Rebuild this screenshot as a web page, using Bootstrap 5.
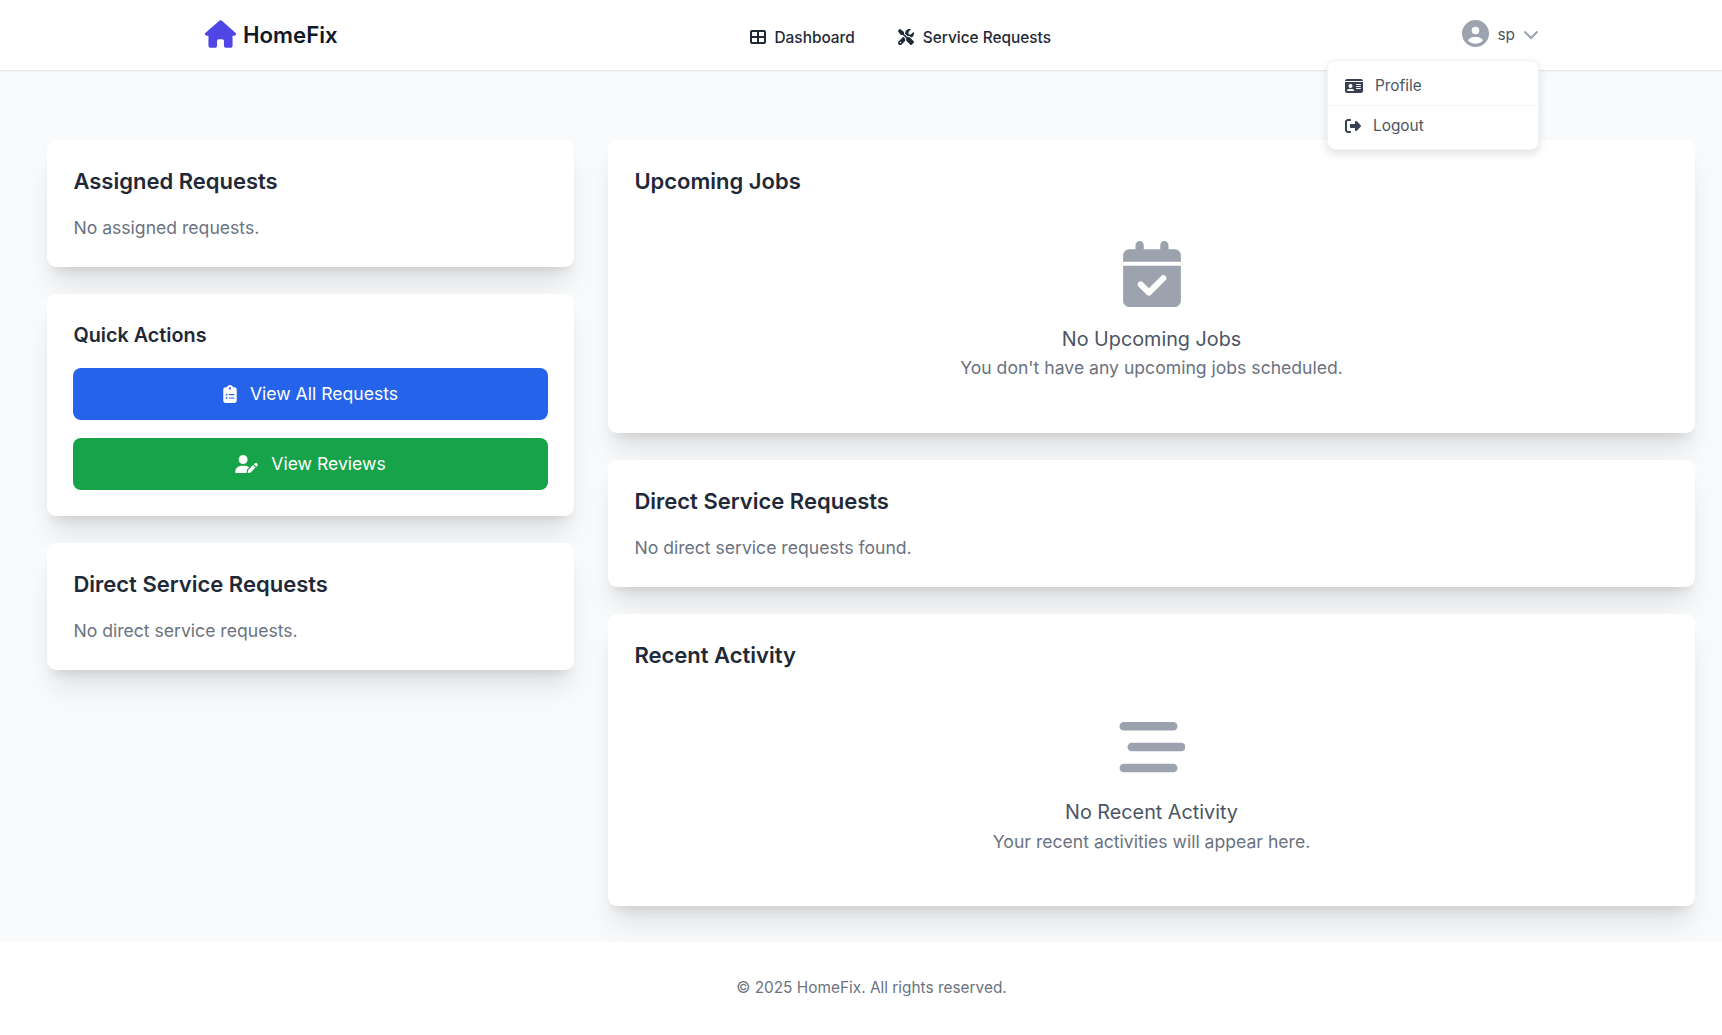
<!DOCTYPE html>
<html lang="en">

<head>
    <meta charset="UTF-8">
    <meta name="viewport" content="width=device-width, initial-scale=1.0">
    <title>HomeFix</title>
    <link href="https://cdn.jsdelivr.net/npm/bootstrap@5.3.0/dist/css/bootstrap.min.css" rel="stylesheet">
    <style>
        body {
            background: #fff;
            color: #1f2937;
            font-family: Inter, "Liberation Sans", sans-serif;
            font-size: 17.6px;
            min-height: 1035px;
        }

        .top-bar {
            height: 71px;
            background: #fff;
            border-bottom: 1px solid #e5e7eb;
            box-shadow: 0 1px 2px rgba(0, 0, 0, .04);
            padding: 0 183px 0 205px;
            position: relative;
        }

        .brand-link {
            color: #111827;
            font-size: 22.2px;
            font-weight: 600;
            text-decoration: none;
            gap: 7px;
        }

        .brand-link svg {
            width: 31px;
            height: 28px;
            fill: #4f46e5;
            margin-top: -1px;
        }

        .top-links {
            position: absolute;
            left: 750px;
            top: 26px;
            gap: 43.5px;
        }

        .top-links a {
            color: #1f2937;
            font-size: 15.4px;
            font-weight: 500;
            text-decoration: none;
            gap: 8.5px;
            line-height: 24px;
        }

        .top-links svg {
            width: 16px;
            height: 16px;
            fill: #1f2937;
            margin-top: -3px;
        }

        .user-toggle {
            color: #4b5563;
            font-size: 15.4px;
            gap: 8px;
            margin-top: -3px;
        }

        .user-toggle .avatar-icon {
            width: 27px;
            height: 27px;
            fill: #9ca3af;
        }

        .user-toggle span {
            margin-top: 2px;
        }

        .user-toggle .chev-icon {
            width: 16px;
            height: 10px;
            fill: none;
            stroke: #9ca3af;
            stroke-width: 2;
            margin-top: 2px;
        }

        .user-menu.dropdown-menu {
            position: absolute;
            display: block;
            left: 1327px;
            top: 60px;
            width: 212px;
            height: 90px;
            padding: 0;
            border: 1px solid #f3f4f6;
            border-radius: 8px;
            box-shadow: 0 4px 10px rgba(0, 0, 0, .12);
            font-size: 15.4px;
            z-index: 5;
        }

        .user-menu .dropdown-item {
            color: #4b5563;
            display: flex;
            align-items: center;
            height: 44px;
            padding: 5px 17px 0;
        }

        .user-menu .dropdown-item + .dropdown-item {
            border-top: 1px solid #f3f4f6;
            height: 45px;
            padding: 0 17px 4px;
        }

        .user-menu svg {
            fill: #374151;
            margin-right: 12px;
        }

        .page-main {
            background: #f9fafb;
            padding: 69px 27px 35px 47px;
            height: 871px;
        }

        .dash-grid {
            display: grid;
            grid-template-columns: 527px 1087px;
            column-gap: 34px;
            align-items: start;
        }

        .dash-col {
            display: flex;
            flex-direction: column;
            gap: 26.8px;
        }

        .dash-card.card {
            border: 0;
            border-radius: 9px;
            padding: 26.4px 26.4px 26px;
            box-shadow: 0 22px 27.5px -5.5px rgba(0, 0, 0, .1), 0 8.8px 11px -6.6px rgba(0, 0, 0, .1);
        }

        .dash-title {
            color: #1f2937;
            font-size: 22px;
            font-weight: 600;
            line-height: 30.8px;
            margin: 0 0 17.6px;
        }

        .dash-title.sm-title {
            font-size: 19.8px;
            margin-bottom: 16.4px;
        }

        .muted-text {
            color: #6b7280;
            font-size: 17.6px;
            line-height: 26.4px;
            margin: 0;
        }

        .action-btn.btn {
            color: #fff;
            font-size: 17.6px;
            font-weight: 400;
            border: 0;
            border-radius: 8px;
            height: 52.4px;
            gap: 13px;
        }

        .action-btn svg {
            fill: #fff;
        }

        .btn-blue.btn {
            background: #2563eb;
            margin-bottom: 17.6px;
        }

        .btn-green.btn {
            background: #16a34a;
        }

        .empty-box {
            text-align: center;
            padding: 26.4px 0 25.4px;
        }

        .empty-box svg {
            fill: #9ca3af;
            display: block;
            margin: 0 auto 16.5px;
        }

        .empty-head {
            color: #4b5563;
            font-size: 19.8px;
            line-height: 31.8px;
            margin: 0;
        }

        .page-foot {
            height: 93px;
            background: #fff;
            padding: 0 0 2px 21px;
            color: #6b7280;
            font-size: 15.4px;
            position: relative;
        }
    </style>
</head>

<body>
    <nav class="top-bar d-flex align-items-center justify-content-between">
        <a class="brand-link d-flex align-items-center" href="#">
            <svg viewBox="0 0 576 512"><path d="M575.8 255.5c0 18-15 32.1-32 32.1h-32l.7 160.2c0 2.7-.2 5.4-.5 8.1V472c0 22.1-17.9 40-40 40H456c-1.1 0-2.2 0-3.3-.1c-1.4 .1-2.8 .1-4.2 .1H416 392c-22.1 0-40-17.9-40-40V448 384c0-17.7-14.3-32-32-32H256c-17.7 0-32 14.3-32 32v64 24c0 22.1-17.9 40-40 40H160 128.1c-1.5 0-3-.1-4.5-.2c-1.2 .1-2.4 .2-3.6 .2H104c-22.1 0-40-17.9-40-40V360c0-.9 0-1.9 .1-2.8V287.6H32c-18 0-32-14-32-32.1c0-9 3-17 10-24L266.4 8c7-7 15-8 22-8s15 2 21 7L564.8 231.5c8 7 12 15 11 24z"/></svg>
            HomeFix
        </a>
        <div class="top-links d-flex">
            <a class="d-flex align-items-center" href="#">
                <svg viewBox="0 0 512 512"><path d="M448 96V224H288V96H448zm0 192V416H288V288H448zM224 224H64V96H224V224zM64 288H224V416H64V288zM64 32C28.7 32 0 60.7 0 96V416c0 35.3 28.7 64 64 64H448c35.3 0 64-28.7 64-64V96c0-35.3-28.7-64-64-64H64z"/></svg>
                Dashboard
            </a>
            <a class="d-flex align-items-center" href="#">
                <svg viewBox="0 0 512 512"><path d="M78.6 5C69.1-2.4 55.6-1.5 47 7L7 47c-8.5 8.5-9.4 22-2.1 31.6l80 104c4.5 5.9 11.6 9.4 19 9.4h54.1l109 109c-14.7 29-10 65.4 14.3 89.6l112 112c12.5 12.5 32.8 12.5 45.3 0l64-64c12.5-12.5 12.5-32.8 0-45.3l-112-112c-24.2-24.2-60.6-29-89.6-14.3l-109-109V104c0-7.5-3.5-14.5-9.4-19L78.6 5zM19.9 396.1C7.2 408.8 0 426.1 0 444.1C0 481.6 30.4 512 67.9 512c18 0 35.3-7.2 48-19.9L233.7 374.3c-7.8-20.9-9-43.6-3.6-65.1l-61.7-61.7L19.9 396.1zM512 144c0-10.5-1.1-20.7-3.2-30.5c-2.4-11.2-16.1-14.1-24.2-6l-63.9 63.9c-3 3-7.1 4.7-11.3 4.7H352c-8.8 0-16-7.2-16-16V102.6c0-4.2 1.7-8.3 4.7-11.3l63.9-63.9c8.1-8.1 5.2-21.8-6-24.2C388.7 1.1 378.5 0 368 0C288.5 0 224 64.5 224 144l0 .8 85.3 85.3c36-9.1 75.8 .5 104 28.7L429 274.5c49-23 83-72.8 83-130.5zM56 432a24 24 0 1 1 48 0 24 24 0 1 1 -48 0z"/></svg>
                Service Requests
            </a>
        </div>
        <div class="user-toggle d-flex align-items-center">
            <svg class="avatar-icon" viewBox="0 0 512 512"><path d="M399 384.2C376.9 345.8 335.4 320 288 320H224c-47.4 0-88.9 25.8-111 64.2c35.2 39.2 86.2 63.8 143 63.8s107.8-24.7 143-63.8zM0 256a256 256 0 1 1 512 0A256 256 0 1 1 0 256zm256 16a72 72 0 1 0 0-144 72 72 0 1 0 0 144z"/></svg>
            <span>sp</span>
            <svg class="chev-icon" viewBox="0 0 16 10"><path d="M1.5 1.5 8 8l6.5-6.5"/></svg>
        </div>
        <div class="user-menu dropdown-menu">
            <a class="dropdown-item" href="#">
                <svg width="18" height="16" viewBox="0 0 576 512"><path d="M0 96l576 0c0-35.3-28.7-64-64-64H64C28.7 32 0 60.7 0 96zm0 32V416c0 35.3 28.7 64 64 64H512c35.3 0 64-28.7 64-64V128H0zM64 405.3c0-29.5 23.9-53.3 53.3-53.3H234.7c29.5 0 53.3 23.9 53.3 53.3c0 5.9-4.8 10.7-10.7 10.7H74.7c-5.9 0-10.7-4.8-10.7-10.7zM176 192a64 64 0 1 1 0 128 64 64 0 1 1 0-128zm176 16c0-8.8 7.2-16 16-16H496c8.8 0 16 7.2 16 16s-7.2 16-16 16H368c-8.8 0-16-7.2-16-16zm0 64c0-8.8 7.2-16 16-16H496c8.8 0 16 7.2 16 16s-7.2 16-16 16H368c-8.8 0-16-7.2-16-16zm0 64c0-8.8 7.2-16 16-16H496c8.8 0 16 7.2 16 16s-7.2 16-16 16H368c-8.8 0-16-7.2-16-16z"/></svg>
                Profile
            </a>
            <a class="dropdown-item" href="#">
                <svg width="16" height="16" viewBox="0 0 512 512"><path d="M377.9 105.9L500.7 228.7c7.2 7.2 11.3 17.1 11.3 27.3s-4.1 20.1-11.3 27.3L377.9 406.1c-6.4 6.4-15 9.9-24 9.9c-18.7 0-33.9-15.2-33.9-33.9l0-62.1-128 0c-17.7 0-32-14.3-32-32l0-64c0-17.7 14.3-32 32-32l128 0 0-62.1c0-18.7 15.2-33.9 33.9-33.9c9 0 17.6 3.6 24 9.9zM160 96L96 96c-17.7 0-32 14.3-32 32l0 256c0 17.7 14.3 32 32 32l64 0c17.7 0 32 14.3 32 32s-14.3 32-32 32l-64 0c-53 0-96-43-96-96L0 128C0 75 43 32 96 32l64 0c17.7 0 32 14.3 32 32s-14.3 32-32 32z"/></svg>
                Logout
            </a>
        </div>
    </nav>

    <main class="page-main">
        <div class="dash-grid">
            <div class="dash-col">
                <div class="card dash-card">
                    <h2 class="dash-title">Assigned Requests</h2>
                    <p class="muted-text">No assigned requests.</p>
                </div>
                <div class="card dash-card">
                    <h3 class="dash-title sm-title">Quick Actions</h3>
                    <a class="btn action-btn btn-blue d-flex align-items-center justify-content-center" href="#">
                        <svg width="14" height="18" viewBox="0 0 384 512"><path d="M192 0c-41.8 0-77.4 26.7-90.5 64H64C28.7 64 0 92.7 0 128V448c0 35.3 28.7 64 64 64H320c35.3 0 64-28.7 64-64V128c0-35.3-28.7-64-64-64H282.5C269.4 26.7 233.8 0 192 0zm0 64a32 32 0 1 1 0 64 32 32 0 1 1 0-64zM72 272a24 24 0 1 1 48 0 24 24 0 1 1 -48 0zm104-16H304c8.8 0 16 7.2 16 16s-7.2 16-16 16H176c-8.8 0-16-7.2-16-16s7.2-16 16-16zM72 368a24 24 0 1 1 48 0 24 24 0 1 1 -48 0zm88 0c0-8.8 7.2-16 16-16H304c8.8 0 16 7.2 16 16s-7.2 16-16 16H176c-8.8 0-16-7.2-16-16z"/></svg>
                        View All Requests
                    </a>
                    <a class="btn action-btn btn-green d-flex align-items-center justify-content-center" href="#">
                        <svg width="23" height="18" viewBox="0 0 640 512"><path d="M224 256A128 128 0 1 0 224 0a128 128 0 1 0 0 256zm-45.7 48C79.8 304 0 383.8 0 482.3C0 498.7 13.3 512 29.7 512H322.8c-3.1-8.8-3.7-18.4-1.4-27.8l15-60.1c2.8-11.3 8.6-21.5 16.8-29.7l40.3-40.3c-32.1-31-75.7-50.1-123.9-50.1H178.3zm435.5-68.3c-15.6-15.6-40.9-15.6-56.6 0l-29.4 29.4 71 71 29.4-29.4c15.6-15.6 15.6-40.9 0-56.6l-14.4-14.4zM375.9 417c-4.1 4.1-7 9.2-8.4 14.9l-15 60.1c-1.4 5.5 .2 11.2 4.2 15.2s9.7 5.6 15.2 4.2l60.1-15c5.6-1.4 10.8-4.3 14.9-8.4L576.1 358.7l-71-71L375.9 417z"/></svg>
                        View Reviews
                    </a>
                </div>
                <div class="card dash-card">
                    <h2 class="dash-title">Direct Service Requests</h2>
                    <p class="muted-text">No direct service requests.</p>
                </div>
            </div>

            <div class="dash-col">
                <div class="card dash-card">
                    <h2 class="dash-title">Upcoming Jobs</h2>
                    <div class="empty-box">
                        <svg width="58" height="66" viewBox="0 0 448 512"><path d="M128 0c17.7 0 32 14.3 32 32V64H288V32c0-17.7 14.3-32 32-32s32 14.3 32 32V64h48c26.5 0 48 21.5 48 48v48H0V112C0 85.5 21.5 64 48 64H96V32c0-17.7 14.3-32 32-32zM0 192H448V464c0 26.5-21.5 48-48 48H48c-26.5 0-48-21.5-48-48V192zM329 305c9.4-9.4 9.4-24.6 0-33.9s-24.6-9.4-33.9 0l-95 95-47-47c-9.4-9.4-24.6-9.4-33.9 0s-9.4 24.6 0 33.9l64 64c9.4 9.4 24.6 9.4 33.9 0L329 305z"/></svg>
                        <p class="empty-head">No Upcoming Jobs</p>
                        <p class="muted-text">You don't have any upcoming jobs scheduled.</p>
                    </div>
                </div>
                <div class="card dash-card">
                    <h2 class="dash-title">Direct Service Requests</h2>
                    <p class="muted-text">No direct service requests found.</p>
                </div>
                <div class="card dash-card">
                    <h2 class="dash-title">Recent Activity</h2>
                    <div class="empty-box">
                        <svg width="66" height="65" viewBox="0 0 66 65"><rect x=".5" y="7" width="58" height="8.6" rx="4.3"/><rect x="8.5" y="27.7" width="58" height="8.6" rx="4.3"/><rect x=".5" y="48.7" width="58" height="8.6" rx="4.3"/></svg>
                        <p class="empty-head">No Recent Activity</p>
                        <p class="muted-text">Your recent activities will appear here.</p>
                    </div>
                </div>
            </div>
        </div>
    </main>

    <footer class="page-foot d-flex align-items-center justify-content-center">
        © 2025 HomeFix. All rights reserved.
    </footer>

    <script src="https://cdn.jsdelivr.net/npm/bootstrap@5.3.0/dist/js/bootstrap.bundle.min.js"></script>
</body>

</html>
